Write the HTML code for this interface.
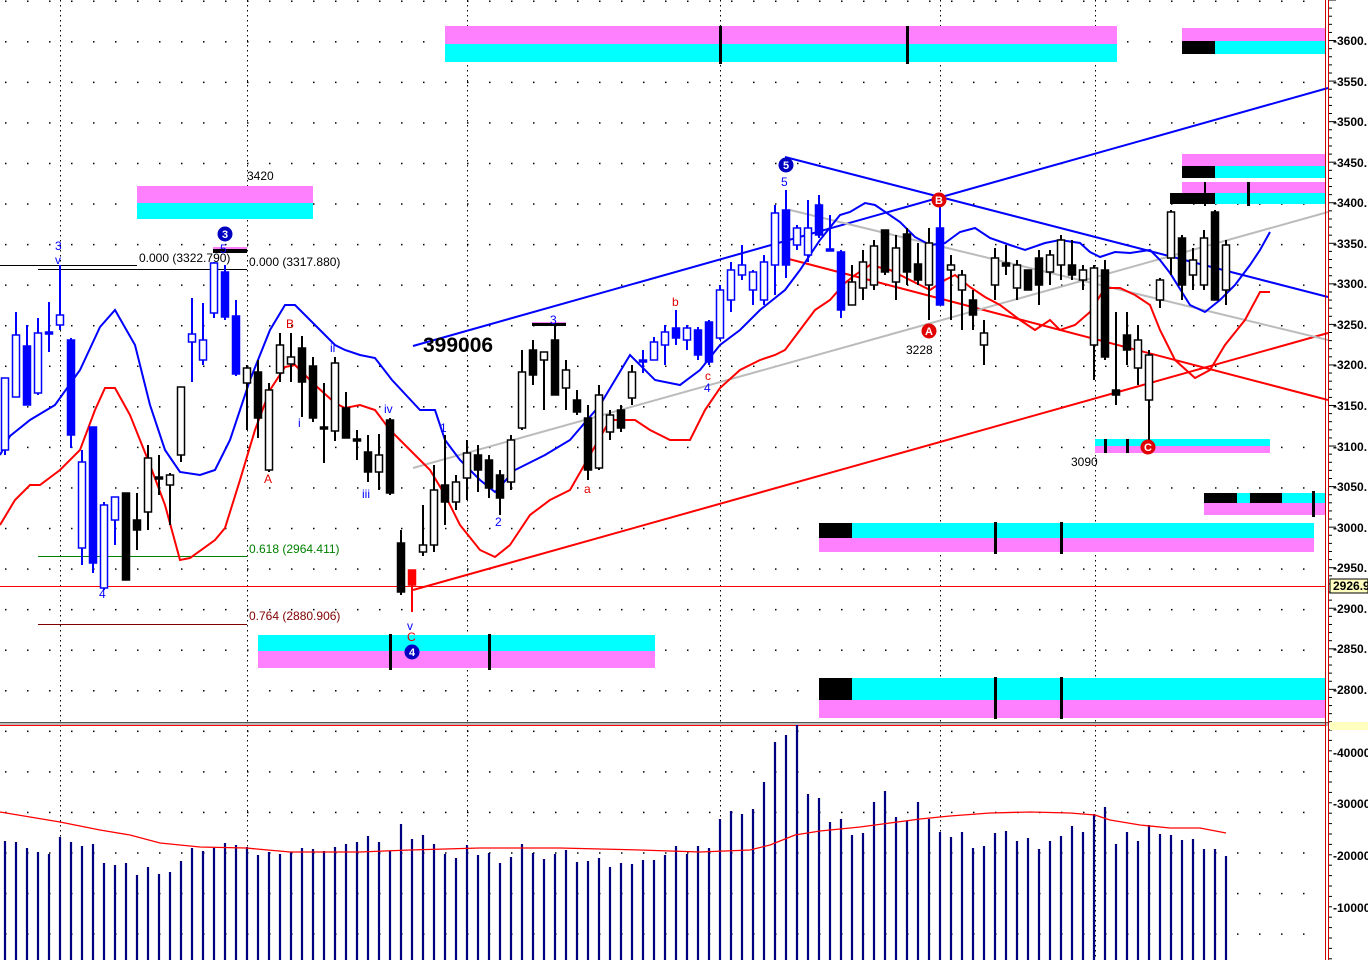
<!DOCTYPE html>
<html><head><meta charset="utf-8"><style>
html,body{margin:0;padding:0;background:#fff;width:1368px;height:960px;overflow:hidden}
svg{display:block;font-family:"Liberation Sans",sans-serif}
</style></head><body>
<svg id="s" width="1368" height="960" viewBox="0 0 1368 960" xmlns="http://www.w3.org/2000/svg">
<defs>
<pattern id="dots" x="5" y="0" width="22" height="40.56" patternUnits="userSpaceOnUse">
<rect x="0" y="0.5" width="1.5" height="1.5" fill="#000"/></pattern>
</defs>
<rect width="1368" height="960" fill="#fff"/>
<rect x="0" y="0" width="1325" height="722" fill="url(#dots)"/>
<rect x="0" y="728" width="1325" height="232" fill="url(#dots)"/>
<g stroke="#000" stroke-dasharray="1.5 3.5" shape-rendering="crispEdges">
<line x1="60.5" y1="0" x2="60.5" y2="960"/><line x1="247.5" y1="0" x2="247.5" y2="960"/>
<line x1="467.5" y1="0" x2="467.5" y2="960"/><line x1="720.5" y1="0" x2="720.5" y2="960"/>
<line x1="940.5" y1="0" x2="940.5" y2="960"/><line x1="1095.5" y1="0" x2="1095.5" y2="960"/>
</g>
<!-- boxes -->
<g>
<rect x="445" y="26" width="672" height="18" fill="#ff80ff"/><rect x="445" y="44" width="672" height="18" fill="#00ffff"/>
<rect x="719" y="26" width="3" height="38" fill="#000"/><rect x="906" y="26" width="3" height="38" fill="#000"/>
<rect x="137" y="186" width="176" height="17" fill="#ff80ff"/><rect x="137" y="203" width="176" height="16" fill="#00ffff"/>
<rect x="1182" y="28" width="143" height="13" fill="#ff80ff"/><rect x="1182" y="41" width="143" height="13" fill="#00ffff"/><rect x="1182" y="41" width="33" height="13" fill="#000"/>
<rect x="1182" y="154" width="143" height="12" fill="#ff80ff"/><rect x="1182" y="166" width="143" height="12" fill="#00ffff"/><rect x="1182" y="166" width="33" height="12" fill="#000"/>
<rect x="1182" y="182" width="143" height="11" fill="#ff80ff"/><rect x="1182" y="193" width="143" height="11" fill="#00ffff"/><rect x="1170" y="193" width="45" height="11" fill="#000"/>
<rect x="1204" y="182" width="2" height="24" fill="#000"/><rect x="1247" y="182" width="3" height="24" fill="#000"/>
<rect x="1095" y="439" width="175" height="7" fill="#00ffff"/><rect x="1095" y="446" width="175" height="7" fill="#ff80ff"/>
<rect x="1104" y="439" width="3" height="14" fill="#000"/><rect x="1126" y="439" width="3" height="14" fill="#000"/>
<rect x="1204" y="493" width="121" height="10" fill="#00ffff"/><rect x="1204" y="503" width="121" height="12" fill="#ff80ff"/>
<rect x="1204" y="493" width="33" height="10" fill="#000"/><rect x="1250" y="493" width="32" height="10" fill="#000"/><rect x="1312" y="491" width="3" height="26" fill="#000"/>
<rect x="819" y="523" width="495" height="15" fill="#00ffff"/><rect x="819" y="538" width="495" height="14" fill="#ff80ff"/><rect x="819" y="523" width="33" height="15" fill="#000"/>
<rect x="994" y="522" width="3" height="32" fill="#000"/><rect x="1060" y="522" width="3" height="32" fill="#000"/>
<rect x="258" y="635" width="397" height="16" fill="#00ffff"/><rect x="258" y="651" width="397" height="17" fill="#ff80ff"/>
<rect x="389" y="634" width="3" height="36" fill="#000"/><rect x="488" y="634" width="3" height="36" fill="#000"/>
<rect x="819" y="678" width="506" height="22" fill="#00ffff"/><rect x="819" y="700" width="506" height="18" fill="#ff80ff"/><rect x="819" y="678" width="33" height="22" fill="#000"/>
<rect x="994" y="677" width="3" height="42" fill="#000"/><rect x="1060" y="677" width="3" height="42" fill="#000"/>
</g>
<g shape-rendering="crispEdges">
<line x1="0" y1="265.5" x2="137" y2="265.5" stroke="#000"/>
<line x1="38" y1="269.5" x2="247" y2="269.5" stroke="#000"/>
<line x1="38" y1="556.5" x2="247" y2="556.5" stroke="#008000"/>
<line x1="38" y1="624.5" x2="247" y2="624.5" stroke="#800000"/>
<line x1="0" y1="586.5" x2="1325" y2="586.5" stroke="#f00"/>
</g>
<rect x="213" y="248" width="34" height="5" fill="#000"/><rect x="213" y="247" width="34" height="2" fill="#ff80ff"/>
<rect x="532" y="323" width="34" height="3" fill="#000"/><rect x="532" y="322" width="34" height="1" fill="#ff80ff"/>
<g stroke-width="2" fill="none">
<line x1="413" y1="346" x2="1328" y2="88" stroke="#0000ff"/>
<line x1="785" y1="157" x2="1328" y2="297" stroke="#0000ff"/>
<line x1="413" y1="590" x2="1328" y2="333" stroke="#f00"/>
<line x1="785" y1="258" x2="1328" y2="400" stroke="#f00"/>
<line x1="413" y1="468" x2="1328" y2="212" stroke="#bbb"/>
<line x1="790" y1="210" x2="1328" y2="340" stroke="#bbb"/>
</g>
<polyline fill="none" stroke="#0000ff" stroke-width="2" points="0,455 10,436 30,420 55,405 80,370 100,327 115,310 135,345 150,405 165,450 180,472 200,475 215,470 230,440 250,380 270,330 285,305 295,305 315,325 335,345 345,350 360,355 375,358 392,380 420,410 435,410 445,440 460,460 480,480 495,492 515,470 545,455 570,440 600,405 630,355 655,380 680,385 700,370 720,345 740,330 760,310 785,290 800,270 820,240 840,215 850,212 865,203 875,205 900,222 915,237 930,245 945,243 960,232 975,228 990,238 1010,245 1025,250 1045,243 1060,240 1080,243 1090,252 1100,257 1115,252 1130,253 1150,250 1160,260 1170,273 1190,305 1205,312 1220,300 1235,285 1250,265 1260,250 1270,232"/>
<polyline fill="none" stroke="#f00" stroke-width="2" points="0,525 15,500 30,485 40,485 60,470 80,450 95,410 105,388 115,388 130,415 150,465 165,505 180,560 190,558 215,540 225,528 240,480 255,430 270,390 285,367 295,365 315,385 335,403 345,408 360,405 375,410 390,430 410,450 430,470 445,495 460,525 480,550 495,557 510,545 530,515 550,500 570,490 590,455 610,420 635,420 650,430 670,440 690,440 705,410 720,388 740,370 760,360 775,355 785,350 800,330 815,310 830,300 845,283 855,275 870,265 890,270 910,280 930,290 945,280 955,275 970,287 985,297 1000,305 1020,320 1035,330 1050,320 1060,330 1075,325 1090,312 1105,288 1120,288 1135,295 1150,305 1160,330 1175,360 1195,378 1210,370 1225,345 1245,320 1260,292 1270,292"/>
<g id="candles"></g>
<!-- volume panel -->
<rect x="0" y="722" width="1328" height="4" fill="#bbb"/>
<line x1="0" y1="722.5" x2="1328" y2="722.5" stroke="#555"/>
<line x1="0" y1="725.5" x2="1325" y2="725.5" stroke="#f00"/>
<g id="vol" stroke="#000080" stroke-width="2.2"></g>
<polyline fill="none" stroke="#f00" stroke-width="1.3" points="0,812 30,817 60,822 100,830 130,835 160,843 200,847 246,848 290,852 360,852 410,850 480,848 560,848 640,850 700,852 750,850 770,845 795,835 820,831 860,827 890,823 920,819 950,816 990,813 1030,812 1070,813 1095,815 1110,820 1140,825 1170,828 1200,828 1226,833"/>
<!-- axis -->
<rect x="1328" y="0" width="40" height="960" fill="#fff"/>
<line x1="1325.5" y1="0" x2="1325.5" y2="960" stroke="#c00"/>
<line x1="1328.5" y1="0" x2="1328.5" y2="960" stroke="#c00"/>
<g id="ticks" stroke="#000"></g>
<g font-size="12" font-weight="bold" fill="#000">
<text x="1333" y="45">-3600.</text><text x="1333" y="86">-3550.</text><text x="1333" y="126">-3500.</text><text x="1333" y="167">-3450.</text><text x="1333" y="207">-3400.</text><text x="1333" y="248">-3350.</text><text x="1333" y="288">-3300.</text><text x="1333" y="329">-3250.</text><text x="1333" y="369">-3200.</text><text x="1333" y="410">-3150.</text><text x="1333" y="451">-3100.</text><text x="1333" y="491">-3050.</text><text x="1333" y="532">-3000.</text><text x="1333" y="572">-2950.</text><text x="1333" y="613">-2900.</text><text x="1333" y="653">-2850.</text><text x="1333" y="694">-2800.</text>
<text x="1333" y="757">-40000</text><text x="1333" y="808">-30000</text><text x="1333" y="860">-20000</text><text x="1333" y="912">-10000</text>
</g>
<rect x="1330" y="579" width="38" height="14" fill="#ffffc0" stroke="#000"/>
<text x="1333" y="590" font-size="12" font-weight="bold">2926.9</text>
<rect x="1330" y="722" width="38" height="8" fill="#ffffc0"/>
<g font-family="Liberation Sans,sans-serif" font-size="12">
<text x="247" y="180" fill="#000">3420</text>
<text x="139" y="262" fill="#000">0.000 (3322.790)</text>
<text x="249" y="266" fill="#000">0.000 (3317.880)</text>
<text x="249" y="553" fill="#008000">0.618 (2964.411)</text>
<text x="249" y="620" fill="#800000">0.764 (2880.906)</text>
<text x="423" y="352" font-size="21" font-weight="bold" fill="#000">399006</text>
<text x="906" y="354" fill="#000">3228</text>
<text x="1071" y="466" fill="#000">3090</text>
<g fill="#0000ff">
<text x="55" y="250">3</text><text x="55" y="264">v</text><text x="99" y="598">4</text>
<text x="220" y="253">5</text><text x="330" y="352">ii</text><text x="298" y="427">i</text><text x="384" y="413">iv</text><text x="362" y="498">iii</text>
<text x="440" y="432">1</text><text x="495" y="526">2</text><text x="550" y="324">3</text><text x="704" y="392">4</text><text x="781" y="186">5</text><text x="407" y="630">v</text>
</g>
<g fill="#e00000">
<text x="286" y="328">B</text><text x="264" y="483">A</text><text x="672" y="306">b</text><text x="584" y="493">a</text><text x="705" y="380">c</text><text x="407" y="641">C</text>
</g>
</g>
<g font-size="11" font-weight="bold" fill="#fff" text-anchor="middle">
<circle cx="225" cy="234" r="7.5" fill="#0000c0"/><text x="225" y="238">3</text>
<circle cx="786" cy="165" r="7.5" fill="#0000c0"/><text x="786" y="169">5</text>
<circle cx="412" cy="652" r="7.5" fill="#0000c0"/><text x="412" y="656">4</text>
<circle cx="939" cy="200" r="7.5" fill="#e00000"/><text x="939" y="204">B</text>
<circle cx="929" cy="331" r="7.5" fill="#e00000"/><text x="929" y="335">A</text>
<circle cx="1148" cy="447" r="7.5" fill="#e00000"/><text x="1148" y="451">C</text>
</g>
</svg>
<script>
var NS="http://www.w3.org/2000/svg";
function el(t,a,p){var e=document.createElementNS(NS,t);for(var k in a)e.setAttribute(k,a[k]);p.appendChild(e);return e;}
var g=document.getElementById('candles');
var C=[[5,378,455,378,450,0,'b'],[16,312,397,335,397,0,'b'],[27,325,405,346,405,1,'b'],[38,318,395,333,393,0,'b'],[49,302,352,332,334,1,'b'],[60,265,330,315,325,0,'b'],[71,338,448,340,435,1,'b'],[82,450,565,462,548,0,'b'],[93,427,573,427,563,1,'b'],[104,502,590,505,588,0,'b'],[115,497,545,497,520,0,'b'],[126,493,580,493,580,1,'k'],[137,493,550,520,530,1,'k'],[148,445,530,458,512,0,'k'],[159,455,495,477,479,1,'k'],[170,473,525,475,485,0,'k'],[181,387,462,387,455,0,'k'],[192,298,382,334,342,0,'b'],[203,303,365,340,360,0,'b'],[214,262,318,263,313,0,'b'],[225,265,320,272,317,1,'b'],[236,300,376,316,374,1,'b'],[247,365,430,368,383,0,'k'],[258,360,438,372,418,1,'k'],[269,383,472,390,470,0,'k'],[280,333,382,345,373,0,'k'],[291,333,382,357,364,0,'k'],[302,336,417,348,382,1,'k'],[313,357,422,366,418,1,'k'],[324,383,463,427,429,1,'k'],[335,357,441,363,431,0,'k'],[346,392,438,408,438,1,'k'],[357,430,460,439,441,1,'k'],[368,435,482,452,472,1,'k'],[379,434,490,455,472,0,'k'],[390,418,495,420,493,1,'k'],[401,530,595,543,592,1,'k'],[412,570,612,570,585,1,'r'],[423,505,556,545,552,0,'k'],[434,465,552,490,545,0,'k'],[445,435,525,485,502,1,'k'],[456,475,510,482,502,0,'k'],[467,440,500,453,478,0,'k'],[478,445,492,455,470,1,'k'],[489,455,498,460,488,1,'k'],[500,470,515,475,498,1,'k'],[511,435,490,440,482,0,'k'],[522,350,430,372,428,0,'k'],[533,340,385,350,375,1,'k'],[544,352,410,352,360,0,'k'],[555,325,395,340,395,1,'k'],[566,360,410,370,388,0,'k'],[577,390,415,400,412,1,'k'],[588,405,480,418,470,1,'k'],[599,385,470,395,468,0,'k'],[610,410,440,415,432,0,'k'],[621,405,432,410,428,1,'k'],[632,365,405,372,398,0,'k'],[643,350,373,360,362,1,'b'],[654,337,360,342,360,0,'b'],[665,325,365,332,345,0,'b'],[676,310,345,328,338,1,'b'],[687,325,350,328,340,0,'b'],[698,327,360,330,355,1,'b'],[709,320,365,322,362,1,'b'],[720,285,340,290,338,0,'b'],[731,262,312,270,300,0,'b'],[742,245,280,265,275,0,'b'],[753,270,305,272,290,0,'b'],[764,255,305,262,300,0,'b'],[775,205,295,213,265,0,'b'],[786,190,278,210,265,1,'b'],[797,225,250,228,245,0,'b'],[808,200,262,228,255,0,'b'],[819,195,238,205,235,1,'b'],[830,215,250,249,251,1,'b'],[841,250,318,252,310,1,'b'],[852,265,305,282,305,0,'k'],[863,250,300,262,288,0,'k'],[874,240,290,246,285,0,'k'],[885,230,275,230,272,1,'k'],[896,235,300,248,282,0,'k'],[907,228,285,234,272,1,'k'],[918,243,285,264,280,1,'k'],[929,228,320,243,285,0,'k'],[940,198,305,228,305,1,'b'],[951,255,320,265,270,0,'k'],[962,270,330,275,290,0,'k'],[973,290,330,300,315,1,'k'],[984,320,365,333,345,0,'k'],[995,248,300,258,285,0,'k'],[1006,245,275,263,266,1,'k'],[1017,260,300,265,288,0,'k'],[1028,270,290,270,290,1,'k'],[1039,250,305,258,285,1,'k'],[1050,250,285,255,272,0,'k'],[1061,235,280,240,265,0,'k'],[1072,240,280,265,275,1,'k'],[1083,265,290,270,280,0,'k'],[1094,265,380,268,345,0,'k'],[1105,260,360,270,357,1,'k'],[1116,312,405,390,395,1,'k'],[1127,312,365,335,350,1,'k'],[1138,325,385,340,368,0,'k'],[1149,350,440,355,400,0,'k'],[1160,278,308,280,300,0,'k'],[1171,210,275,212,258,0,'k'],[1182,235,300,238,285,1,'k'],[1193,248,290,260,275,0,'k'],[1204,230,290,238,285,0,'k'],[1215,210,300,212,300,1,'k'],[1226,240,305,245,290,0,'k']];
var col={b:'#0000ff',k:'#000',r:'#f00'};
C.forEach(function(c){var cl=col[c[6]];el('line',{x1:c[0],y1:c[1],x2:c[0],y2:c[2],stroke:cl,'stroke-width':2},g);
el('rect',{x:c[0]-3.5,y:c[3],width:7,height:Math.max(2,c[4]-c[3]),fill:c[5]?cl:'#fff',stroke:cl,'stroke-width':1.5},g);});
var v=document.getElementById('vol');
var T=[841,842,848,852,854,837,842,846,844,863,865,863,875,867,874,872,861,848,851,848,843,845,847,855,852,854,852,848,849,851,847,844,842,836,842,851,824,839,835,844,854,858,845,855,853,863,857,844,853,859,854,850,862,861,858,867,863,864,860,860,855,846,854,846,848,819,811,814,809,782,742,735,725,794,798,822,819,835,833,802,791,817,821,802,819,832,837,832,848,846,833,831,841,838,849,841,836,826,832,814,807,844,832,841,825,834,835,840,839,849,849,856];
for(var i=0;i<T.length;i++){var x=5+i*11;el('line',{x1:x,y1:T[i],x2:x,y2:960},v);}
var tk=document.getElementById('ticks');
for(var y=0;y<722;y+=8.11){var big=Math.abs(((y-41)/40.56)-Math.round((y-41)/40.56))<0.05;el('line',{x1:1329,y1:y,x2:big?1336:1332,y2:y},tk);}
for(var y=730;y<960;y+=10.4){el('line',{x1:1329,y1:y,x2:1332,y2:y},tk);}
</script>
</body></html>
